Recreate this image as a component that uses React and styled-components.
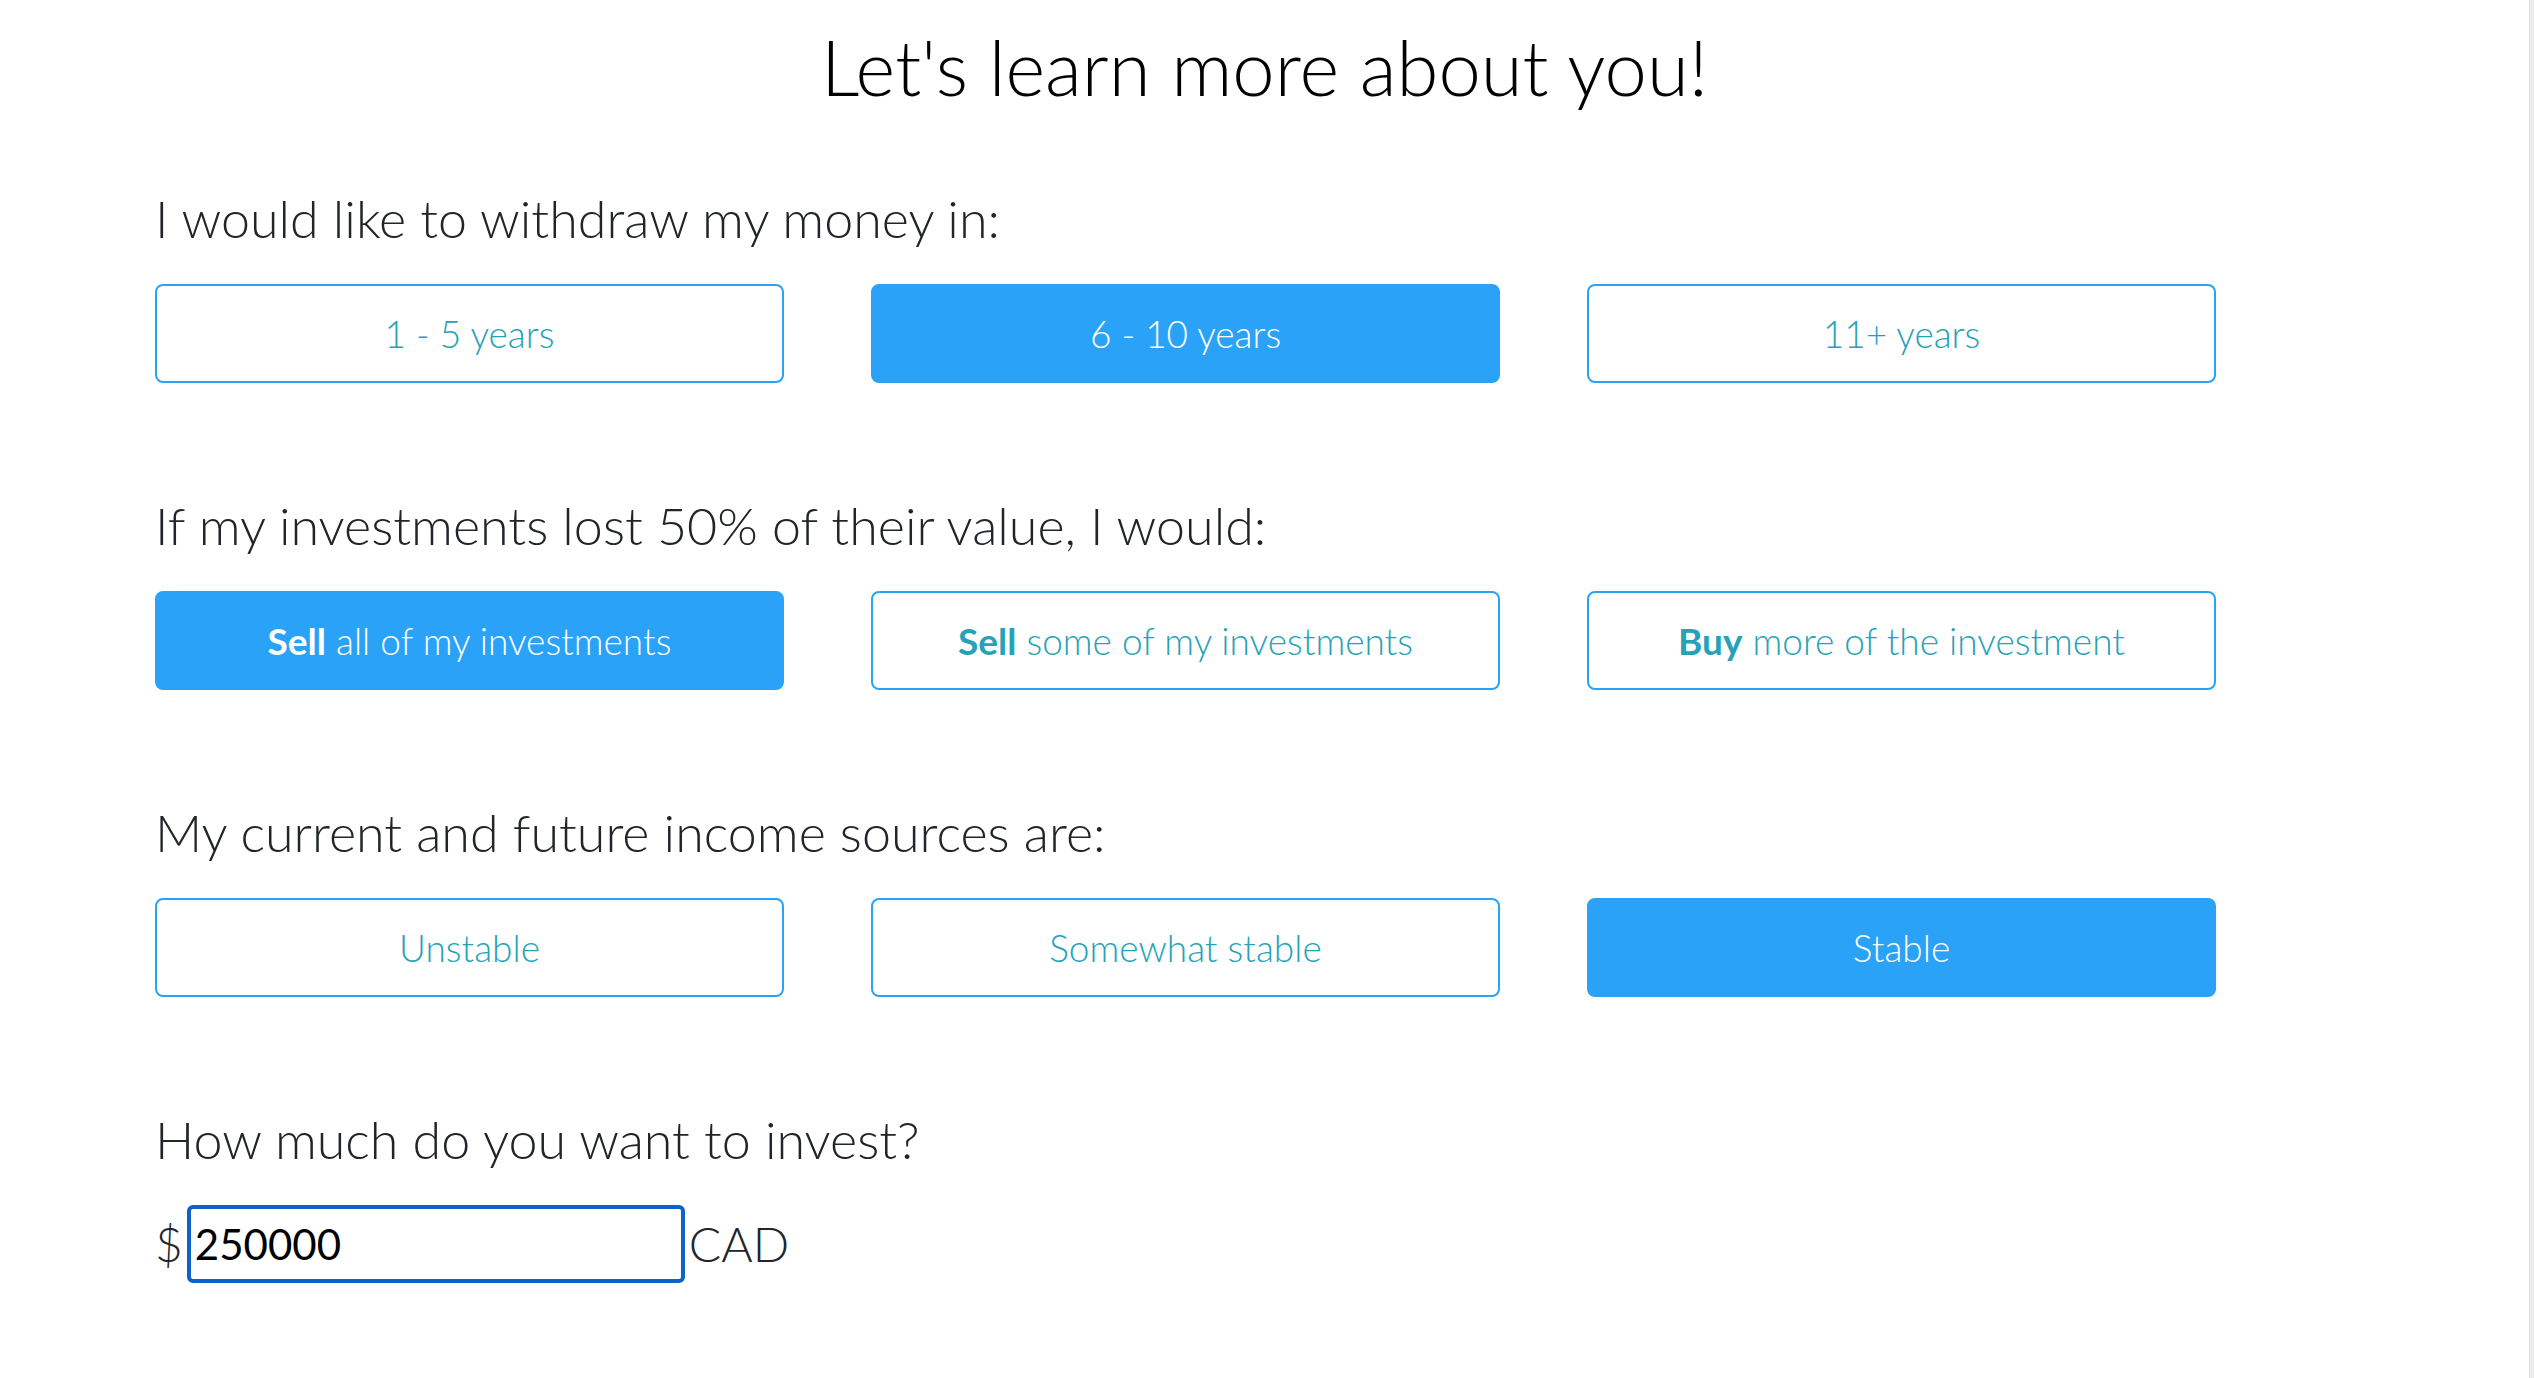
import React, { useState } from "react";
import styled, { createGlobalStyle } from "styled-components";

const GlobalStyle = createGlobalStyle`
  html, body {
    margin: 0;
    padding: 0;
    background: #ffffff;
  }
  body {
    font-family: Lato, "Noto Sans", "Liberation Sans", sans-serif;
    -webkit-font-smoothing: antialiased;
  }
`;

const Shell = styled.div`
  display: flex;
  min-height: 100vh;
`;

const Main = styled.main`
  flex: 1;
  display: flex;
  flex-direction: column;
  padding: 27px 0 0 155px;
  background: #ffffff;
`;

const ScrollEdge = styled.div`
  width: 4px;
  background: #ececec;
  border-left: 1px solid #dcdcdc;
`;

const Title = styled.h1`
  margin: 0 0 81px -155px;
  font-weight: 300;
  font-size: 76px;
  line-height: 80px;
  color: #000;
  text-align: center;
`;

const Section = styled.section`
  display: flex;
  flex-direction: column;
  gap: 36px;
  margin-bottom: 112px;
`;

const Question = styled.h2`
  margin: 0;
  font-weight: 300;
  font-size: 52px;
  line-height: 60px;
  color: #212529;
`;

const Options = styled.div`
  display: grid;
  grid-template-columns: repeat(3, 629px);
  column-gap: 87px;
`;

const Option = styled.button`
  height: 99px;
  box-sizing: border-box;
  border: 2px solid #2aa3f6;
  border-radius: 8px;
  background: ${(p) => (p.$selected ? "#2aa2f8" : "#ffffff")};
  color: ${(p) => (p.$selected ? "#ffffff" : "#26a2b8")};
  font-family: inherit;
  font-weight: 300;
  font-size: 37px;
  cursor: pointer;
  padding: 0;

  b {
    font-weight: 700;
  }
`;

const AmountRow = styled.div`
  display: flex;
  align-items: center;
  gap: 4px;
  color: #212529;
  font-size: 48px;
  font-weight: 300;
`;

const Affix = styled.span`
  line-height: 60px;
`;

const AmountInput = styled.input`
  width: 498px;
  height: 78px;
  box-sizing: border-box;
  border: 4px solid #0f62c9;
  border-radius: 6px;
  padding: 0 4px;
  font-family: inherit;
  font-size: 42px;
  font-weight: 400;
  color: #000;
  outline: none;
`;

const questions = [
  {
    label: "I would like to withdraw my money in:",
    options: [
      { text: "1 - 5 years" },
      { text: "6 - 10 years" },
      { text: "11+ years" },
    ],
    selected: 1,
  },
  {
    label: "If my investments lost 50% of their value, I would:",
    options: [
      { bold: "Sell", text: " all of my investments" },
      { bold: "Sell", text: " some of my investments" },
      { bold: "Buy", text: " more of the investment" },
    ],
    selected: 0,
  },
  {
    label: "My current and future income sources are:",
    options: [
      { text: "Unstable" },
      { text: "Somewhat stable" },
      { text: "Stable" },
    ],
    selected: 2,
  },
];

export default function App() {
  const [answers, setAnswers] = useState(questions.map((q) => q.selected));
  const [amount, setAmount] = useState("250000");

  return (
    <>
      <GlobalStyle />
      <Shell>
        <Main>
          <Title>Let's learn more about you!</Title>
          {questions.map((q, qi) => (
            <Section key={q.label}>
              <Question>{q.label}</Question>
              <Options>
                {q.options.map((o, oi) => (
                  <Option
                    key={oi}
                    $selected={answers[qi] === oi}
                    onClick={() =>
                      setAnswers((a) => a.map((v, i) => (i === qi ? oi : v)))
                    }
                  >
                    {o.bold && <b>{o.bold}</b>}
                    {o.text}
                  </Option>
                ))}
              </Options>
            </Section>
          ))}
          <Section>
            <Question>How much do you want to invest?</Question>
            <AmountRow>
              <Affix>$</Affix>
              <AmountInput
                value={amount}
                onChange={(e) => setAmount(e.target.value)}
              />
              <Affix>CAD</Affix>
            </AmountRow>
          </Section>
        </Main>
        <ScrollEdge />
      </Shell>
    </>
  );
}
